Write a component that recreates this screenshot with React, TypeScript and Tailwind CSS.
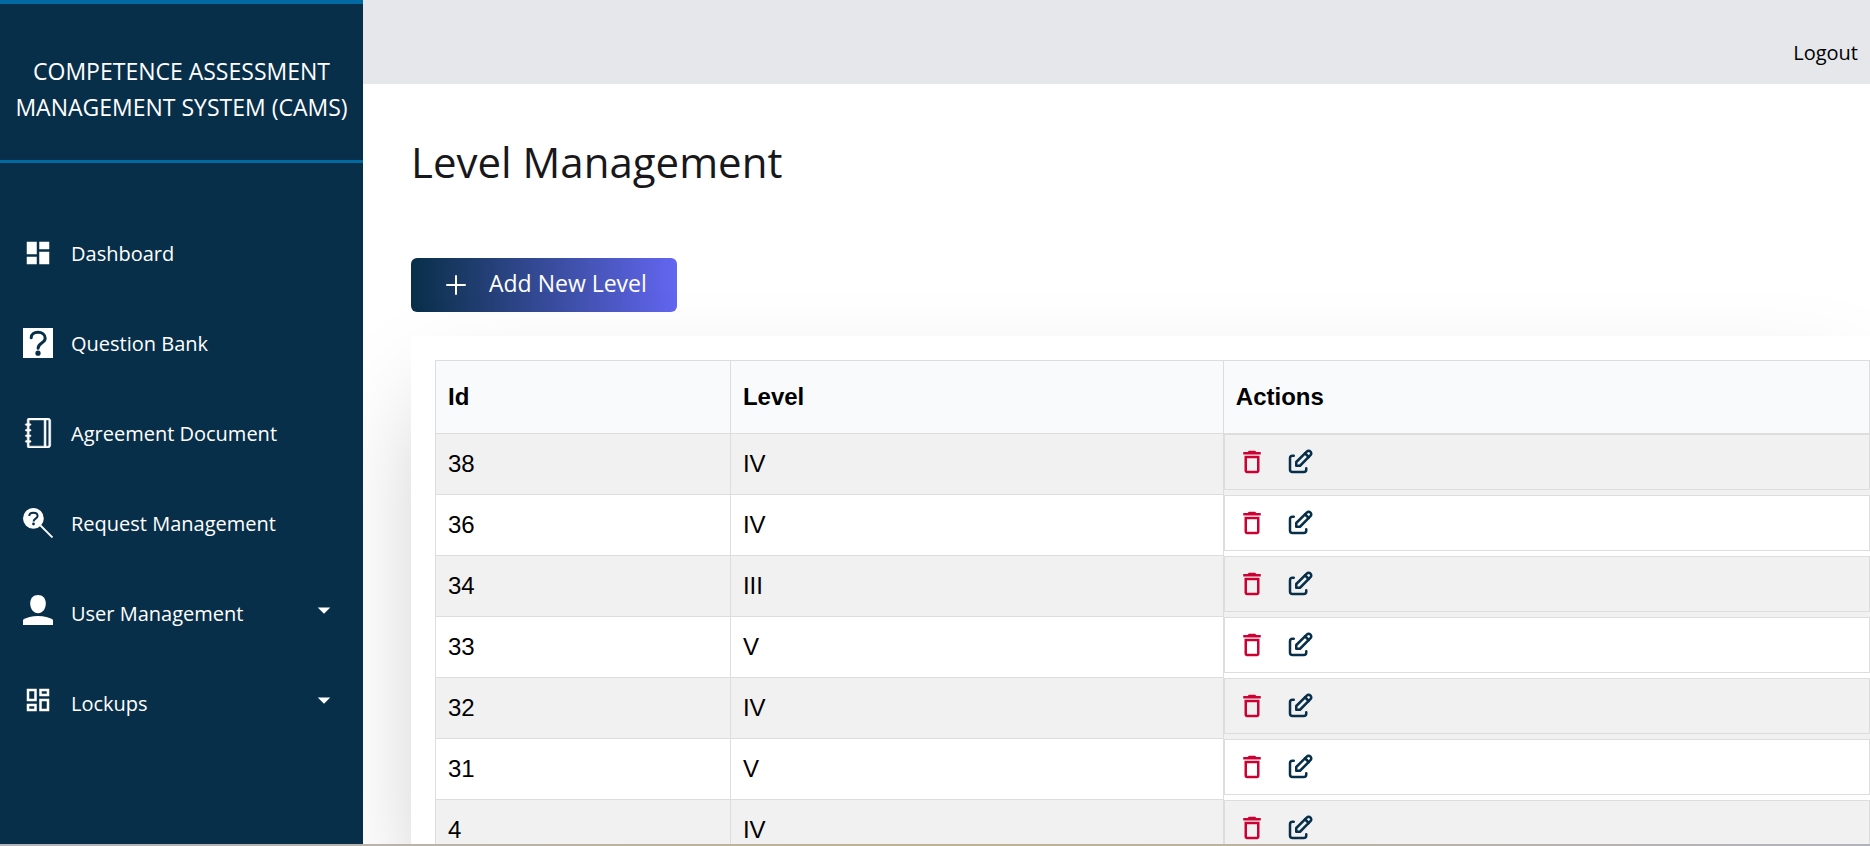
import type { ReactNode } from 'react';
import { MdDashboard, MdDeleteOutline, MdOutlineDashboard, MdArrowDropDown } from 'react-icons/md';
import { SlNotebook } from 'react-icons/sl';
import { TbEdit } from 'react-icons/tb';

function QuestionSquareIcon() {
  return (
    <svg viewBox="0 0 30 30" className="size-[30px]" aria-hidden="true">
      <path d="M0 0h30v30H0z" fill="currentColor" />
      <path
        d="M8.2 9.8C8.200 6.200 11 4.200 15 4.200s7.200 2.400 7.200 6c0 5-7.100 4.600-7.100 10"
        fill="none"
        stroke="#082f49"
        strokeWidth="3"
        strokeLinecap="round"
      />
      <circle cx="15" cy="25.2" r="2.6" fill="#082f49" />
    </svg>
  );
}

function RequestIcon() {
  return (
    <svg viewBox="0 0 30 30" className="size-[30px]" aria-hidden="true" fill="none">
      <circle cx="10.4" cy="10.4" r="10.4" fill="currentColor" />
      <path d="M17.5 17.5 29.5 29.5" stroke="currentColor" strokeWidth="1.8" />
      <path
        d="M6.3 8C6.3 5.700 8 4.700 10.400 4.700s4.200 1.300 4.200 3.300c0 2.800-4 2.500-4 5.500"
        stroke="#082f49"
        strokeWidth="2"
      />
      <circle cx="10.500" cy="16" r="1.400" fill="#082f49" />
    </svg>
  );
}

function PersonIcon() {
  return (
    <svg viewBox="0 0 30 30" className="size-[30px]" aria-hidden="true" fill="currentColor">
      <path d="M15 0c4.600 0 7.800 3.400 7.800 8.400 0 5.300-3.400 9.800-7.800 9.800s-7.800-4.500-7.800-9.800C7.200 3.400 10.400 0 15 0z" />
      <path d="M0 30v-5.200c3.500-2.500 9-3.800 15-3.800s11.500 1.300 15 3.800V30z" />
    </svg>
  );
}

type NavItem = { label: string; icon: ReactNode; expandable?: boolean };

const navItems: NavItem[] = [
  { label: 'Dashboard', icon: <MdDashboard size={30} /> },
  { label: 'Question Bank', icon: <QuestionSquareIcon /> },
  { label: 'Agreement Document', icon: <SlNotebook size={30} strokeWidth={20} stroke="currentColor" /> },
  { label: 'Request Management', icon: <RequestIcon /> },
  { label: 'User Management', icon: <PersonIcon />, expandable: true },
  { label: 'Lockups', icon: <MdOutlineDashboard size={30} />, expandable: true },
];

const levels = [
  { id: 38, level: 'IV' },
  { id: 36, level: 'IV' },
  { id: 34, level: 'III' },
  { id: 33, level: 'V' },
  { id: 32, level: 'IV' },
  { id: 31, level: 'V' },
  { id: 4, level: 'IV' },
];

const navRow = 'flex h-[90px] w-full items-center pr-6 pl-[23px] text-left';

function Sidebar() {
  return (
    <aside className="w-[363px] shrink-0 border-t-4 border-[#026aa2] bg-[#082f49] text-white">
      <div className="border-b-[3px] border-[#026aa2] px-2 pt-[49px] pb-[35px] text-center text-[23px] leading-9">
        COMPETENCE ASSESSMENT
        <br />
        MANAGEMENT SYSTEM (CAMS)
      </div>
      <nav className="pt-[45px] text-[20px] leading-[30px]">
        <ul>
          {navItems.map(({ label, icon, expandable }) => (
            <li key={label}>
              {expandable ? (
                <button type="button" className={`${navRow} pb-1.5`}>
                  {icon}
                  <span className="grow pt-2 pl-[18px]">{label}</span>
                  <MdArrowDropDown size={30} />
                </button>
              ) : (
                <a href="#" className={navRow}>
                  {icon}
                  <span className="grow pt-0.5 pl-[18px]">{label}</span>
                </a>
              )}
            </li>
          ))}
        </ul>
      </nav>
    </aside>
  );
}

function LevelTable() {
  return (
    <table className="w-full table-fixed border-separate border-spacing-0 text-left font-['Liberation_Sans',Arial,sans-serif] text-[24px] leading-9 text-black">
      <colgroup>
        <col className="w-[20.55%]" />
        <col className="w-[34.35%]" />
        <col className="w-[45.1%]" />
      </colgroup>
      <thead>
        <tr className="h-[74px] bg-[#f8fafc]">
          <th className="border-y border-l border-[#dddddd] px-3">Id</th>
          <th className="border-y border-l border-[#dddddd] px-3">Level</th>
          <th className="border border-[#dddddd] px-3">Actions</th>
        </tr>
      </thead>
      <tbody>
        {levels.map(({ id, level }) => (
          <tr key={id} className="h-[61px] odd:bg-[#f1f1f1]">
            <td className="border-b border-l border-[#dddddd] px-3">{id}</td>
            <td className="border-b border-l border-[#dddddd] px-3">{level}</td>
            <td className="border-l border-[#dddddd] align-top">
              <div className="flex h-14 gap-[18px] border border-[#dddddd] p-3">
                <button type="button" aria-label={`Delete level ${id}`} className="size-[30px] text-[#cc0033]">
                  <MdDeleteOutline size={30} />
                </button>
                <button type="button" aria-label={`Edit level ${id}`} className="size-[30px] text-[#082f49]">
                  <TbEdit size={30} />
                </button>
              </div>
            </td>
          </tr>
        ))}
      </tbody>
    </table>
  );
}

export default function App() {
  return (
    <div className="flex h-screen flex-col overflow-hidden bg-white font-['Open_Sans','Segoe_UI',sans-serif]">
      <div className="flex min-h-0 grow overflow-hidden">
        <Sidebar />
        <div className="min-w-0 grow overflow-hidden">
          <header className="flex h-[84px] items-end justify-end bg-[#e5e7eb] px-3 pb-4">
            <a href="#" className="text-[20px] leading-[30px] text-black">
              Logout
            </a>
          </header>
          <main className="pl-12">
            <h1 className="pt-[42px] text-[42px] leading-[72px] text-[#18181b]">Level Management</h1>
            <button
              type="button"
              className="mt-[60px] flex h-[54px] w-[266px] items-center rounded-md bg-linear-to-r from-[#082f49] to-[#6366f1] pl-[35px] text-[23px] text-white"
            >
              <svg viewBox="0 0 20 20" className="mr-[23px] size-5" aria-hidden="true">
                <path d="M10 1v18M1 10h18" stroke="currentColor" strokeWidth="2" strokeLinecap="round" />
              </svg>
              <span className="pb-1">Add New Level</span>
            </button>
            <section className="mt-6 bg-white pt-6 pl-6 shadow-[0_50px_100px_-20px_rgba(0,0,0,0.25)]">
              <LevelTable />
            </section>
          </main>
        </div>
      </div>
      <div className="h-0.5 shrink-0 bg-linear-to-r from-[#b5b4bc] via-[#bfb193] to-[#b3b3bd]" />
    </div>
  );
}
